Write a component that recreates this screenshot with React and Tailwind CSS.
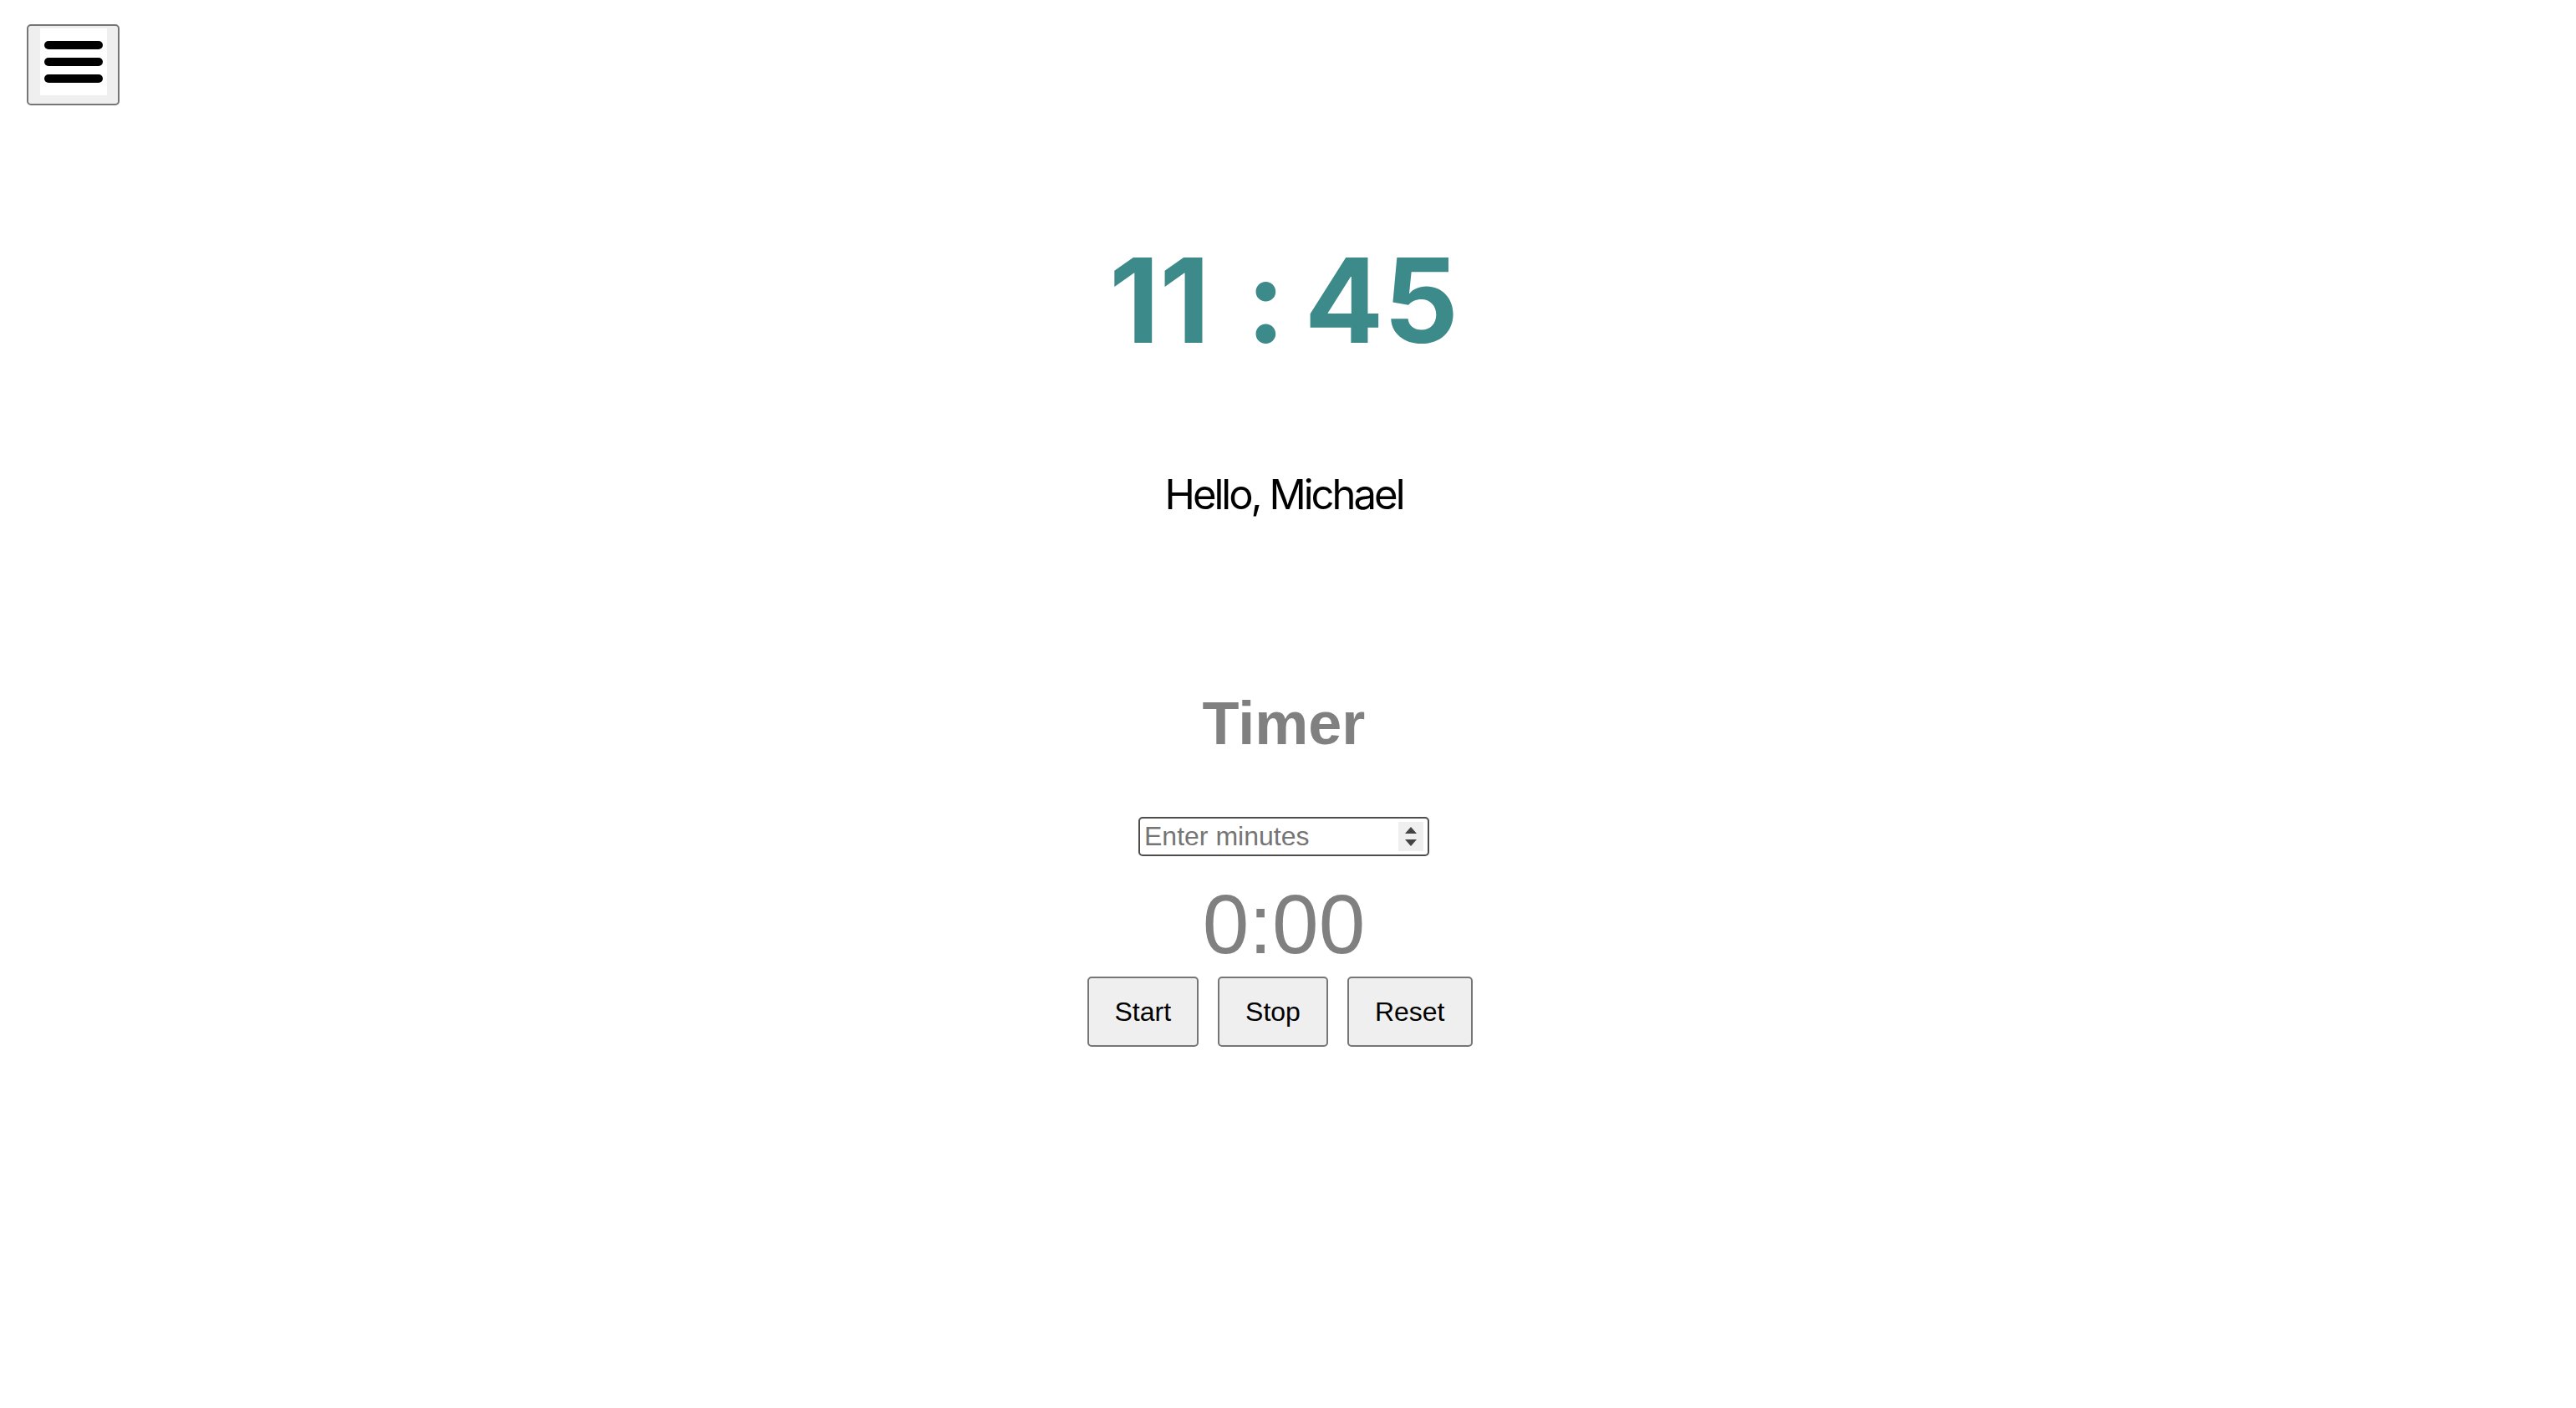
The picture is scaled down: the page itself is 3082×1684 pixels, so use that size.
import React, { useState } from "react";

const MenuIcon = () => (
  <svg width="80" height="80" viewBox="0 0 80 80" className="block bg-white">
    <g stroke="#000" strokeWidth="10" strokeLinecap="round">
      <line x1="10" y1="20" x2="70" y2="20" />
      <line x1="10" y1="40" x2="70" y2="40" />
      <line x1="10" y1="60" x2="70" y2="60" />
    </g>
  </svg>
);

const Spinner = () => (
  <div className="flex h-[35px] w-[30px] flex-col items-center justify-center gap-[7px] bg-[#efefef]">
    <svg width="14" height="8" viewBox="0 0 14 8">
      <polygon points="7,0 14,8 0,8" fill="#444" />
    </svg>
    <svg width="14" height="8" viewBox="0 0 14 8">
      <polygon points="0,0 14,0 7,8" fill="#444" />
    </svg>
  </div>
);

const TimerButton = ({ children, onClick }) => (
  <button
    onClick={onClick}
    className="h-[84px] rounded-[5px] border-2 border-[#767676] bg-[#efefef] px-[31px] font-['Liberation_Sans',Arial,sans-serif] text-[32px] leading-none text-black"
  >
    {children}
  </button>
);

export default function App() {
  const [minutes, setMinutes] = useState("");

  return (
    <div className="min-h-screen bg-white">
      <div className="pl-[32px] pt-[29px]">
        <button className="flex rounded-[5px] border-2 border-[#767676] bg-[#efefef] pb-[10px] pl-[14px] pr-[13px] pt-[3px]">
          <MenuIcon />
        </button>
      </div>

      <main className="flex flex-col items-center pr-[10px]">
        <h1 className="mt-[163px] font-['Inter',sans-serif] text-[140px] font-bold leading-none text-[#3c8a89]">
          11 <span className="ml-[10px]">:</span>
          <span className="[word-spacing:-10px]"> 45</span>
        </h1>

        <p className="mt-[138px] font-['Inter',sans-serif] text-[49px] leading-none tracking-[-3px] text-black">
          Hello, Michael
        </p>

        <h2 className="mt-[213px] font-['Liberation_Sans',Arial,sans-serif] text-[72px] font-bold leading-none text-[#808080]">
          Timer
        </h2>

        <div className="mt-[76px] flex h-[47px] w-[348px] items-center rounded-[5px] border-2 border-[#4d4d4d] pl-[5px] pr-[5px]">
          <input
            type="text"
            value={minutes}
            onChange={(e) => setMinutes(e.target.value)}
            placeholder="Enter minutes"
            className="min-w-0 flex-1 bg-transparent font-['Liberation_Sans',Arial,sans-serif] text-[32px] leading-none text-black outline-none placeholder:text-[#757575]"
          />
          <Spinner />
        </div>

        <div className="mt-[31px] font-['Liberation_Sans',Arial,sans-serif] text-[100px] leading-none text-[#808080]">
          0:00
        </div>

        <div className="mt-[13px] flex gap-[23px] pr-[10px]">
          <TimerButton>Start</TimerButton>
          <TimerButton>Stop</TimerButton>
          <TimerButton>Reset</TimerButton>
        </div>
      </main>
    </div>
  );
}
